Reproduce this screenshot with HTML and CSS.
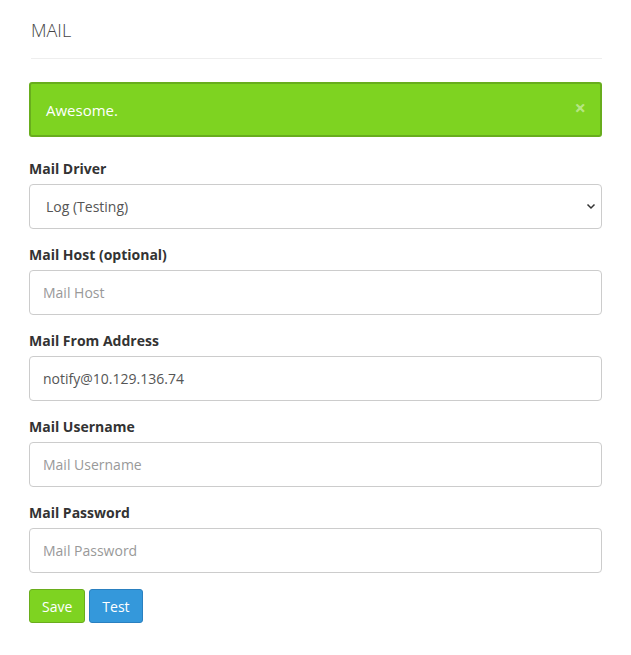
FILE: index.html
```html
<!DOCTYPE html>
<html>
<head>
<meta charset="utf-8">
<link rel="stylesheet" href="styles.css">
</head>
<body>
<div class="page">
  <h3 class="title">MAIL</h3>
  <div class="alert">
    <span>Awesome.</span>
    <span class="close">&times;</span>
  </div>
  <form class="form">
    <div class="group">
      <label class="label">Mail Driver</label>
      <div class="select-wrap">
        <select class="control select">
          <option>Log (Testing)</option>
        </select>
        <svg class="chev" width="10" height="7" viewBox="0 0 10 7"><path d="M1.5 1.5 L5 5 L8.5 1.5" fill="none" stroke="#333" stroke-width="1.5"/></svg>
      </div>
    </div>
    <div class="group">
      <label class="label">Mail Host (optional)</label>
      <input class="control" placeholder="Mail Host">
    </div>
    <div class="group">
      <label class="label">Mail From Address</label>
      <input class="control" value="notify@10.129.136.74">
    </div>
    <div class="group">
      <label class="label">Mail Username</label>
      <input class="control" placeholder="Mail Username">
    </div>
    <div class="group">
      <label class="label">Mail Password</label>
      <input class="control" placeholder="Mail Password">
    </div>
    <div class="buttons">
      <button type="button" class="btn btn-save">Save</button>
      <button type="button" class="btn btn-test">Test</button>
    </div>
  </form>
</div>
</body>
</html>
```
FILE: styles.css
```css
* { box-sizing: border-box; }
body {
  margin: 0;
  font-family: "Open Sans", "Liberation Sans", sans-serif;
  color: #333;
  background: #fff;
}
.page {
  width: 573px;
  margin-left: 29px;
  padding-top: 18px;
}
.title {
  margin: 0 0 0 2px;
  font-size: 18px;
  font-weight: 300;
  color: #444;
  line-height: 24px;
  padding-bottom: 16px;
  border-bottom: 1px solid #eee;
}
.alert {
  margin-top: 23px;
  height: 55px;
  background: #7ed321;
  border: 2px solid #68ad1d;
  border-radius: 3px;
  color: #fff;
  font-size: 15px;
  display: flex;
  align-items: center;
  justify-content: space-between;
  padding: 0 14px 0 15px;
}
.close {
  color: rgba(255,255,255,0.45);
  font-size: 20px;
  font-weight: 700;
  line-height: 1;
  margin-top: -3px;
}
.form { margin-top: 22px; }
.group { margin-bottom: 16px; }
.label {
  display: block;
  font-size: 14px;
  font-weight: 700;
  color: #333;
  line-height: 20px;
  margin-bottom: 5px;
}
.control {
  display: block;
  width: 100%;
  height: 45px;
  border: 1px solid #ccc;
  border-radius: 4px;
  font-family: "Open Sans", "Liberation Sans", sans-serif;
  font-size: 14px;
  color: #555;
  padding: 0 13px;
  background: #fff;
  outline: none;
}
.control::placeholder { color: #999; }
.select-wrap { position: relative; }
.select {
  -webkit-appearance: none;
  appearance: none;
  padding-left: 16px;
  font-size: 14px;
}
.chev {
  position: absolute;
  right: 6px;
  top: 19px;
}
.buttons {
  display: flex;
  gap: 4px;
  margin-top: 0;
}
.btn {
  height: 34px;
  border-radius: 3px;
  font-family: "Open Sans", "Liberation Sans", sans-serif;
  font-size: 14px;
  color: #fff;
  padding: 0 12px;
  border: 1px solid;
}
.btn-save { background: #7ed321; border-color: #6aad1c; }
.btn-test { background: #3498db; border-color: #2a80c0; }
```
